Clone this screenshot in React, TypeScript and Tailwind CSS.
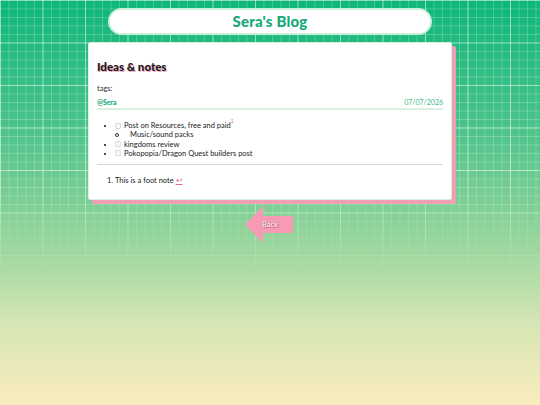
import React from 'react';

const font = { fontFamily: 'Lato, "Noto Sans", sans-serif' };

const Checkbox: React.FC = () => (
  <span className="inline-block w-[6px] h-[6px] mr-[3px] border border-[#dcdcdc] rounded-[1px] bg-[#f7f7f7] align-[-0.5px]" />
);

const App: React.FC = () => {
  return (
    <div
      className="relative min-h-screen w-full overflow-hidden bg-[linear-gradient(to_bottom,#0db67a_0%,#4fc48b_33%,#93d49b_58%,#d6e6b4_80%,#faecbe_100%)]"
      style={font}
    >
      {/* grid pattern, fades out toward the bottom */}
      <div className="pointer-events-none absolute inset-0 bg-[linear-gradient(to_right,rgba(255,255,255,0.4)_1px,transparent_1px),linear-gradient(to_bottom,rgba(255,255,255,0.4)_1px,transparent_1px),linear-gradient(to_right,rgba(255,255,255,0.22)_1px,transparent_1px),linear-gradient(to_bottom,rgba(255,255,255,0.22)_1px,transparent_1px)] bg-[size:42.5px_42.5px,42.5px_42.5px,8.5px_8.5px,8.5px_8.5px] [mask-image:linear-gradient(to_bottom,black_0%,black_45%,transparent_68%)]" />

      <div className="relative flex flex-col items-center">
        {/* Header */}
        <header className="mt-[8px] w-[324px] h-[27px] rounded-full bg-white border-2 border-[#c9f0da] flex items-center justify-center">
          <h1 className="text-[15px] font-black text-[#15a978] tracking-[0.2px]">Sera's Blog</h1>
        </header>

        {/* Post card */}
        <article className="mt-[7px] w-[364px] bg-white border border-[#d6efe0] rounded-[2px] shadow-[4px_4px_0_#ef9fb2] px-[8px] pt-[15px] pb-[14px] text-[#222]">
          <h2 className="text-[11.5px] font-black text-[#1a1a1a] [text-shadow:1px_1px_0_#f3a3bb]">Ideas &amp; notes</h2>

          <p className="mt-[8px] text-[7.5px] text-[#333]">tags:</p>

          <div className="mt-[2px] flex items-center justify-between text-[7px]">
            <span className="font-black text-[#15a978]">@Sera</span>
            <span className="text-[#3bbb8c]">07/07/2026</span>
          </div>

          <div className="mt-[1px] h-[2px] bg-[#d9f1df]" />

          <ul className="mt-[11px] list-disc pl-[18px] text-[7.5px] leading-[9.3px] text-[#222] marker:text-[#111]">
            <li>
              <Checkbox />
              Post on Resources, free and paid
              <sup className="text-[5px] text-[#e26a8f] align-[3px]">1</sup>
              <ul className="list-none pl-[15px]">
                <li>
                  <span className="inline-block w-[4px] h-[4px] rounded-full border-[0.8px] border-[#333] -ml-[15px] mr-[11px] align-[0.5px]" />
                  Music/sound packs
                </li>
              </ul>
            </li>
            <li>
              <Checkbox />
              kingdoms review
            </li>
            <li>
              <Checkbox />
              Pokopopia/Dragon Quest builders post
            </li>
          </ul>

          <div className="mt-[6px] h-[1px] bg-[#d8d8d8]" />

          <ol className="mt-[11px] list-decimal pl-[18px] text-[7.5px] leading-[9px] text-[#222]">
            <li>
              This is a foot note <span className="text-[#e26a8f] underline">↩</span>
            </li>
          </ol>
        </article>

        {/* Back arrow */}
        <a className="relative mt-[6px] mr-[3px] w-[48px] h-[37px] flex items-center justify-center cursor-pointer">
          <svg className="absolute inset-0" width="48" height="37" viewBox="0 0 48 37">
            <polygon points="0,18.5 18,0 18,10 48,10 48,27 18,27 18,37" fill="#f79ab5" />
          </svg>
          <span className="relative ml-[3px] text-[7.5px] text-white [text-shadow:0_0_1px_#b0566f,1px_1px_0_#c06a82]">Back</span>
        </a>
      </div>
    </div>
  );
};

export default App;
